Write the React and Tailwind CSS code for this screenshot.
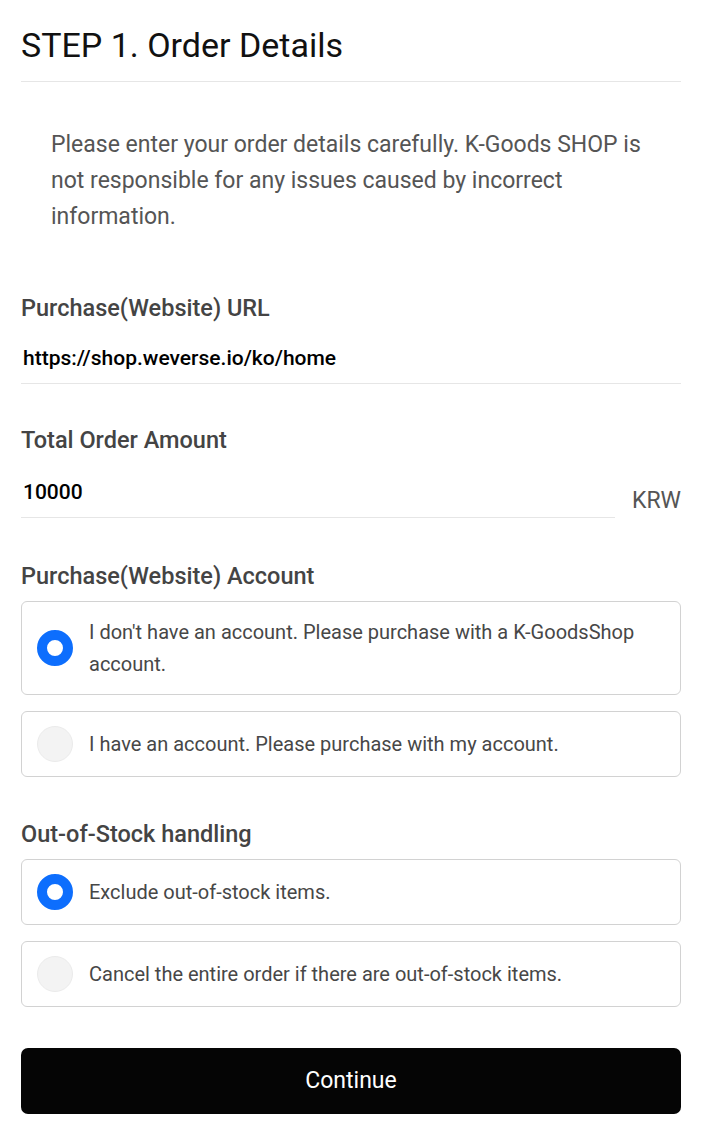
import React, { useState } from 'react';

const font = { fontFamily: 'Roboto, "Noto Sans", Arial, sans-serif' };

function RadioCard({ checked, onSelect, children }) {
  return (
    <button
      type="button"
      onClick={onSelect}
      className="w-full flex items-center text-left border border-[#d2d2d2] rounded-[6px] bg-white pl-[15px] pr-[15px] py-[14px]"
    >
      <span
        className={
          checked
            ? 'shrink-0 w-[36px] h-[36px] rounded-full border-[10px] border-[#0d6efd] bg-white'
            : 'shrink-0 w-[36px] h-[36px] rounded-full border border-[#ebebeb] bg-[#f3f3f3]'
        }
      />
      <span className="ml-[16px] text-[20px] leading-[32px] text-[#474747]">{children}</span>
    </button>
  );
}

export default function App() {
  const [account, setAccount] = useState('shop');
  const [stock, setStock] = useState('exclude');

  return (
    <div className="bg-white min-h-screen px-[21px] pb-[22px]" style={font}>
      {/* Header */}
      <h1 className="pt-[25px] pb-[16px] text-[34px] leading-[40px] font-normal text-[#111] border-b border-[#e6e6e6]">
        STEP 1. Order Details
      </h1>

      {/* Notice */}
      <p className="mt-[45px] px-[30px] text-[23px] leading-[36px] text-[#555]">
        Please enter your order details carefully. K-Goods SHOP is not responsible for any issues caused by incorrect information.
      </p>

      {/* URL */}
      <div className="mt-[59px]">
        <label className="block text-[23.5px] leading-[28px] font-medium text-[#444]">Purchase(Website) URL</label>
        <div className="mt-[12px] h-[50px] flex items-center border-b border-[#e6e6e6] px-[2px]">
          <span className="text-[21px] font-medium text-black">https://shop.weverse.io/ko/home</span>
        </div>
      </div>

      {/* Amount */}
      <div className="mt-[42px]">
        <label className="block text-[23.5px] leading-[28px] font-medium text-[#444]">Total Order Amount</label>
        <div className="mt-[14px] flex items-end gap-[17px]">
          <div className="flex-1 h-[50px] flex items-center border-b border-[#e6e6e6] px-[2px]">
            <span className="text-[21px] font-medium text-black">10000</span>
          </div>
          <span className="pb-[3px] text-[23px] leading-[28px] text-[#555]">KRW</span>
        </div>
      </div>

      {/* Account */}
      <div className="mt-[44px]">
        <label className="block text-[23.5px] leading-[28px] font-medium text-[#444]">Purchase(Website) Account</label>
        <div className="mt-[11px] flex flex-col gap-[16px]">
          <RadioCard checked={account === 'shop'} onSelect={() => setAccount('shop')}>
            I don't have an account. Please purchase with a K-GoodsShop account.
          </RadioCard>
          <RadioCard checked={account === 'mine'} onSelect={() => setAccount('mine')}>
            I have an account. Please purchase with my account.
          </RadioCard>
        </div>
      </div>

      {/* Out of stock */}
      <div className="mt-[43px]">
        <label className="block text-[23.5px] leading-[28px] font-medium text-[#444]">Out-of-Stock handling</label>
        <div className="mt-[11px] flex flex-col gap-[16px]">
          <RadioCard checked={stock === 'exclude'} onSelect={() => setStock('exclude')}>
            Exclude out-of-stock items.
          </RadioCard>
          <RadioCard checked={stock === 'cancel'} onSelect={() => setStock('cancel')}>
            Cancel the entire order if there are out-of-stock items.
          </RadioCard>
        </div>
      </div>

      <button
        type="button"
        className="mt-[41px] w-full h-[66px] rounded-[7px] bg-[#050505] text-white text-[23px] font-normal"
      >
        Continue
      </button>
    </div>
  );
}
